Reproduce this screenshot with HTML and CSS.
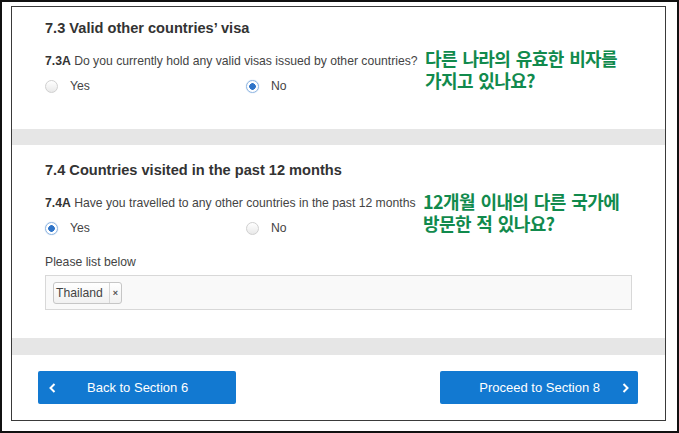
FILE: index.html
```html
<!DOCTYPE html>
<html>
<head>
    <title>Section 7 - Travel history</title>
    <link rel="stylesheet" href="styles.css">
</head>
<body>
    <div class="frame">
        <div class="panel">
            <div class="section first">
                <h3>7.3 Valid other countries’ visa</h3>
                <p class="question"><b>7.3A</b> Do you currently hold any valid visas issued by other countries?
                    <span class="note"><span class="line">다른 나라의 유효한 비자를</span><span class="line">가지고 있나요?</span></span>
                </p>
                <div class="options">
                    <label class="option"><span class="radio"></span>Yes</label>
                    <label class="option"><span class="radio checked"></span>No</label>
                </div>
            </div>
            <div class="band"></div>
            <div class="section second">
                <h3>7.4 Countries visited in the past 12 months</h3>
                <p class="question"><b>7.4A</b> Have you travelled to any other countries in the past 12 months
                    <span class="note note2"><span class="line">12개월 이내의 다른 국가에</span><span class="line">방문한 적 있나요?</span></span>
                </p>
                <div class="options">
                    <label class="option"><span class="radio checked"></span>Yes</label>
                    <label class="option"><span class="radio"></span>No</label>
                </div>
                <p class="list-label">Please list below</p>
                <div class="tags">
                    <span class="tag"><span class="tag-text">Thailand</span><span class="tag-x">×</span></span>
                </div>
            </div>
            <div class="band band2"></div>
            <div class="footer">
                <button class="btn back" type="button">
                    <svg width="7" height="10" viewBox="0 0 7 10"><polyline points="5.5,1 1.5,5 5.5,9" fill="none" stroke="#fff" stroke-width="2"/></svg>
                    <span>Back to Section 6</span>
                </button>
                <button class="btn next" type="button">
                    <span>Proceed to Section 8</span>
                    <svg width="7" height="10" viewBox="0 0 7 10"><polyline points="1.5,1 5.5,5 1.5,9" fill="none" stroke="#fff" stroke-width="2"/></svg>
                </button>
            </div>
        </div>
    </div>
</body>
</html>
```

FILE: styles.css
```css
body {
    margin: 0;
    font-family: "Liberation Sans", Arial, sans-serif;
    color: #333;
    background: #fff;
}
.frame {
    width: 679px;
    height: 433px;
    box-sizing: border-box;
    border: 2px solid #111;
    padding: 4px 0 0 9px;
}
.panel {
    width: 655px;
    height: 415px;
    box-sizing: border-box;
    border: 1px solid #3a3a3a;
    display: flex;
    flex-direction: column;
}
.section {
    padding: 16px 33px 28px 33px;
}
.section.first {
    padding-top: 12px;
    padding-bottom: 35px;
}
h3 {
    margin: 0;
    font-size: 14.6px;
    line-height: 18px;
    font-weight: bold;
    color: #333;
}
.question {
    position: relative;
    margin: 16px 0 0 0;
    font-size: 12.2px;
    line-height: 16px;
    color: #444;
}
.question b {
    color: #333;
}
.note {
    position: absolute;
    left: 380px;
    top: -6px;
    display: flex;
    flex-direction: column;
    font-family: "Noto Sans CJK KR", sans-serif;
    font-weight: bold;
    font-size: 18px;
    letter-spacing: -0.6px;
    word-spacing: 2px;
    color: #118a4d;
    white-space: nowrap;
}
.note .line {
    display: block;
    height: 22px;
    line-height: 22px;
}
.note2 {
    left: 378px;
    top: -5px;
}
.options {
    display: flex;
    margin-top: 9px;
    height: 16px;
}
.option {
    width: 201px;
    display: flex;
    align-items: center;
    font-size: 12.2px;
    color: #444;
}
.radio {
    width: 13px;
    height: 13px;
    box-sizing: border-box;
    border-radius: 50%;
    border: 1px solid #d0d0d0;
    background: linear-gradient(#fff, #e9e9e9);
    margin-right: 12px;
}
.radio.checked {
    border-color: #8fb6e2;
    background: radial-gradient(circle, #2f74c8 0, #2f74c8 3px, #fff 3.6px);
    box-shadow: 0 0 1px #8fb6e2;
}
.list-label {
    margin: 18px 0 5px 0;
    font-size: 12.2px;
    line-height: 16px;
    color: #444;
}
.tags {
    height: 35px;
    box-sizing: border-box;
    border: 1px solid #d8d8d8;
    background: #f9f9f9;
    padding: 6px 7px;
    display: flex;
    align-items: flex-start;
}
.tag {
    display: flex;
    height: 22px;
    box-sizing: border-box;
    border: 1px solid #c6c6c6;
    border-radius: 3px;
    background: linear-gradient(#fff, #f1f1f1);
    font-size: 12.2px;
    line-height: 20px;
    color: #444;
}
.tag-text {
    padding: 0 6px 0 2px;
}
.tag-x {
    border-left: 1px solid #d6d6d6;
    padding: 0 3px;
    font-size: 9px;
    font-weight: bold;
    color: #555;
}
.band {
    height: 16px;
    background: #e6e6e6;
}
.band2 {
    height: 17px;
}
.footer {
    display: flex;
    justify-content: space-between;
    padding: 16px 27px 0 26px;
}
.btn {
    width: 198px;
    height: 33px;
    border: none;
    border-radius: 2px;
    background: #1279d1;
    color: #fff;
    font-family: "Liberation Sans", Arial, sans-serif;
    font-size: 13px;
    display: flex;
    align-items: center;
    padding: 0;
    cursor: pointer;
}
.btn.back {
    padding-left: 11px;
}
.btn.back span {
    margin-left: 31px;
}
.btn.next {
    justify-content: flex-end;
    padding-right: 9px;
}
.btn.next span {
    margin-right: 22px;
}
```
